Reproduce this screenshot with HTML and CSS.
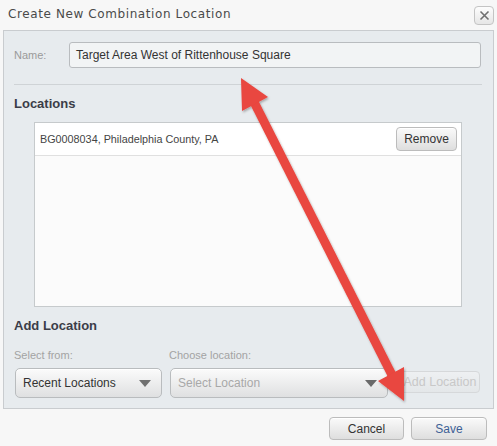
FILE: index.html
```html
<!DOCTYPE html>
<html>
<head>
<meta charset="utf-8">
<link rel="stylesheet" href="styles.css">
</head>
<body>
<div class="dialog">
  <div class="titlebar">
    <span class="title">Create New Combination Location</span>
    <button class="close" aria-label="Close">
      <svg width="11" height="11" viewBox="0 0 11 11"><path d="M1.5 1.5 L9.5 9.5 M9.5 1.5 L1.5 9.5" stroke="#6f6f6f" stroke-width="1.6" fill="none"/></svg>
    </button>
  </div>
  <div class="panel">
    <div class="name-row">
      <label class="name-label">Name:</label>
      <div class="input">Target Area West of Rittenhouse Square</div>
    </div>
    <div class="sep"></div>
    <h2 class="section">Locations</h2>
    <div class="list">
      <div class="row">
        <span class="row-text">BG0008034, Philadelphia County, PA</span>
        <button class="btn remove">Remove</button>
      </div>
    </div>
    <h2 class="section add-title">Add Location</h2>
    <div class="add-row">
      <div class="field">
        <div class="flabel">Select from:</div>
        <div class="select first"><span>Recent Locations</span><span class="caret"></span></div>
      </div>
      <div class="field">
        <div class="flabel">Choose location:</div>
        <div class="select second placeholder"><span>Select Location</span><span class="caret dark"></span></div>
      </div>
      <button class="btn add disabled">Add Location</button>
    </div>
  </div>
  <div class="footer">
    <button class="btn foot">Cancel</button>
    <button class="btn foot save">Save</button>
  </div>
  <svg class="annot" width="497" height="446" viewBox="0 0 497 446">
    <defs>
      <filter id="sh" x="-10%" y="-10%" width="120%" height="120%">
        <feDropShadow dx="1" dy="1.5" stdDeviation="1.2" flood-color="#000" flood-opacity="0.3"/>
      </filter>
    </defs>
    <g filter="url(#sh)" fill="#e9463f">
      <line x1="253" y1="100" x2="393" y2="377" stroke="#e9463f" stroke-width="9"/>
      <polygon points="241,78 242,111 268,97"/>
      <polygon points="404,401 378,381 404,367"/>
    </g>
  </svg>
</div>
</body>
</html>
```

FILE: styles.css
```css
* { box-sizing: border-box; }
html, body { margin: 0; padding: 0; }
body {
  background: #f7f7f7;
  font-family: "Liberation Sans", Arial, sans-serif;
  color: #333;
}
.dialog {
  position: relative;
  width: 497px;
  height: 446px;
  background: #f7f7f7;
  overflow: hidden;
}
.titlebar {
  height: 30px;
  display: flex;
  align-items: center;
  justify-content: space-between;
  padding: 0 3px 0 8px;
}
.title {
  font-family: "DejaVu Sans", Verdana, sans-serif;
  font-size: 12px;
  letter-spacing: 0.6px;
  color: #4a4a4a;
  margin-top: -2px;
}
.close {
  width: 20px;
  height: 19px;
  margin-top: 1px;
  padding: 0;
  display: flex;
  align-items: center;
  justify-content: center;
  border: 1px solid #c4c4c4;
  border-radius: 4px;
  background: linear-gradient(#fdfdfd, #e6e6e6);
}
.panel {
  margin-left: 3px;
  width: 491px;
  height: 379px;
  border: 1px solid #c9cccf;
  background: #e7ebee;
  padding: 11px 10px 0 10px;
}
.name-row {
  display: flex;
  align-items: center;
  height: 26px;
}
.name-label {
  width: 55px;
  font-size: 11px;
  color: #9a9a9a;
}
.input {
  width: 412px;
  height: 26px;
  border: 1px solid #b9bcbf;
  border-radius: 3px;
  background: #f2f4f5;
  padding-left: 6px;
  font-size: 12px;
  line-height: 24px;
  color: #333;
}
.sep {
  margin-top: 16px;
  width: 468px;
  height: 1px;
  background: #cfd3d6;
}
.section {
  margin: 9px 0 8px 0;
  height: 20px;
  line-height: 20px;
  font-size: 13px;
  font-weight: bold;
  color: #3b3d48;
}
.list {
  margin-left: 20px;
  width: 428px;
  height: 185px;
  border: 1px solid #c6cacc;
  background: #fbfbfb;
}
.row {
  height: 33px;
  background: #fff;
  border-bottom: 1px solid #e0e0e0;
  display: flex;
  align-items: center;
  justify-content: space-between;
  padding: 0 4px 0 5px;
}
.row-text {
  font-size: 10.8px;
  color: #444;
}
.btn {
  font-family: "Liberation Sans", Arial, sans-serif;
  border: 1px solid #bcbcbc;
  border-radius: 4px;
  background: linear-gradient(#fafafa, #dedede);
  color: #333;
  padding: 0;
  box-shadow: inset 0 1px 0 #fff;
}
.remove {
  width: 61px;
  height: 24px;
  font-size: 12px;
  margin-top: -1px;
}
.add-title {
  margin-top: 9px;
  margin-bottom: 0;
}
.add-row {
  display: flex;
  align-items: flex-end;
}
.field {
  display: flex;
  flex-direction: column;
}
.field + .field { margin-left: 7px; }
.flabel {
  margin-top: 11px;
  height: 16px;
  line-height: 16px;
  font-size: 11px;
  color: #a3a3a3;
}
.select {
  margin-top: 5px;
  margin-left: 1px;
  height: 30px;
  border: 1px solid #b9bcbe;
  border-radius: 5px;
  background: linear-gradient(#fbfbfb, #dfe0e1);
  box-shadow: inset 0 1px 0 #fff;
  display: flex;
  align-items: center;
  justify-content: space-between;
  padding: 0 10px 0 7px;
  font-size: 12px;
  color: #333;
}
.first { width: 147px; }
.second { width: 218px; }
.placeholder { color: #a8a8a8; }
.caret {
  width: 0;
  height: 0;
  border-left: 6px solid transparent;
  border-right: 6px solid transparent;
  border-top: 7px solid #707070;
}
.caret.dark { border-top-color: #6a6a6a; }
.add {
  margin-left: 12px;
  margin-bottom: 5px;
  width: 80px;
  height: 22px;
  font-size: 12.5px;
}
.disabled {
  color: #c8c8c8;
  border-color: #d6d8da;
  background: linear-gradient(#eef0f2, #e4e7e9);
  box-shadow: none;
}
.footer {
  display: flex;
  justify-content: flex-end;
  padding: 8px 10px 0 0;
  gap: 7px;
}
.foot {
  height: 23px;
  width: 75px;
  font-size: 12px;
}
.save { width: 76px; color: #3d5f95; }
.annot {
  position: absolute;
  left: 0;
  top: 0;
  pointer-events: none;
}
```
